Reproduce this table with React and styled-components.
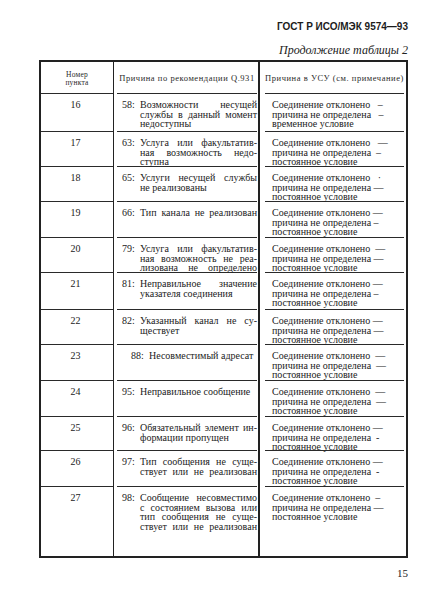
import React from 'react';
import styled, { createGlobalStyle } from 'styled-components';

const Global = createGlobalStyle`
  html, body { margin: 0; padding: 0; background: #fff; }
  #root { width: 422px; height: 603px; }
`;

const Page = styled.div`
  width: 422px;
  height: 603px;
  box-sizing: border-box;
  padding: 21px 14px 0 39px;
  font-family: "Liberation Serif", "Times New Roman", serif;
  color: #222;
  background: #fff;
  display: flex;
  flex-direction: column;
`;

const Heading = styled.div`
  display: flex;
  flex-direction: column;
  align-items: flex-end;
`;

const Title = styled.div`
  font-family: "Liberation Sans", Arial, sans-serif;
  font-weight: 700;
  font-size: 10px;
  line-height: 12px;
  color: #1c1c1c;
`;

const Subtitle = styled.div`
  margin-top: 10px;
  font-style: italic;
  font-size: 12px;
  line-height: 14px;
  color: #222;
`;

const Table = styled.div`
  margin-top: 3px;
  display: flex;
  width: 369px;
  box-sizing: border-box;
  border: 2px solid #222;
`;

const Column = styled.div`
  display: flex;
  flex-direction: column;
  flex: none;
  width: ${p => p.$w}px;
  box-sizing: border-box;
  border-right: ${p => (p.$rule ? `${p.$rule}px solid #222` : 'none')};
`;

const Cell = styled.div`
  box-sizing: border-box;
  height: ${p => p.$h}px;
  margin: 0 ${p => p.$mr || 0}px 0 ${p => p.$ml || 0}px;
  border-bottom: ${p => (p.$last ? 'none' : '1px solid #2a2a2a')};
  font-size: 10px;
  line-height: 9.5px;
`;

const HeadCell = styled(Cell)`
  display: flex;
  flex-direction: column;
  align-items: center;
  justify-content: center;
  padding-top: 2px;
  font-size: 8.5px;
  line-height: 8.5px;
  letter-spacing: 0.55px;
  color: #2a2a2a;
  text-align: center;
`;

const SmallHead = styled.div`
  font-size: 7.5px;
  line-height: 8px;
  letter-spacing: 0.2px;
`;

const NumCell = styled(Cell)`
  padding-top: 6px;
  text-align: center;
  padding-right: 3px;
`;

const ReasonCell = styled(Cell)`
  display: flex;
  padding: 6px 0 0 ${p => p.$pad}px;
`;

const Code = styled.div`
  flex: none;
  width: 18px;
`;

const Lines = styled.div`
  flex: ${p => (p.$auto ? 'none' : '1')};
  min-width: 0;
`;

const Line = styled.div`
  white-space: nowrap;
  ${p => p.$j && `
    white-space: normal;
    text-align: justify;
    text-align-last: justify;
  `}
`;

const ResultCell = styled(Cell)`
  padding: 6px 0 0 7px;
`;

const ResultLine = styled.div`
  white-space: pre;
`;

const PageNum = styled.div`
  align-self: flex-end;
  margin-top: 9px;
  font-size: 11px;
  line-height: 12px;
  color: #222;
`;

const std = ['Соединение отклонено  —', 'причина не определена  —', 'постоянное условие'];

const rows = [
  { n: '16', h: 38, code: '58:', lines: [['Возможности несущей', 1], ['службы в данный момент', 1], ['недоступны', 0]],
    res: ['Соединение отклонено   –', 'причина не определена   –', 'временное условие'] },
  { n: '17', h: 35, code: '63:', lines: [['Услуга или факультатив-', 1], ['ная возможность недо-', 1], ['ступна', 0]],
    res: ['Соединение отклонено   —', 'причина не определена  –', 'постоянное условие'] },
  { n: '18', h: 35, code: '65:', lines: [['Услуги несущей службы', 1], ['не реализованы', 0]],
    res: ['Соединение отклонено   ·', 'причина не определена —', 'постоянное условие'] },
  { n: '19', h: 36, code: '66:', lines: [['Тип канала не реализован', 1]], res: ['Соединение отклонено —', 'причина не определена –', 'постоянное условие'] },
  { n: '20', h: 35, code: '79:', lines: [['Услуга или факультатив-', 1], ['ная возможность не реа-', 1], ['лизована не определено', 1]],
    res: ['Соединение отклонено  —', 'причина не определена —', 'постоянное условие'] },
  { n: '21', h: 37, code: '81:', lines: [['Неправильное значение', 1], ['указателя соединения', 0]],
    res: ['Соединение отклонено —', 'причина не определена –', 'постоянное условие'] },
  { n: '22', h: 35, code: '82:', lines: [['Указанный канал не су-', 1], ['ществует', 0]],
    res: ['Соединение отклонено —', 'причина не определена —', 'постоянное условие'] },
  { n: '23', h: 36, code: '88:', indent: 14, lines: [['Несовместимый адресат', 0]], res: std },
  { n: '24', h: 36, code: '95:', lines: [['Неправильное сообщение', 0]], res: std },
  { n: '25', h: 34, code: '96:', lines: [['Обязательный элемент ин-', 1], ['формации пропущен', 0]],
    res: ['Соединение отклонено —', 'причина не определена  -', 'постоянное условие'] },
  { n: '26', h: 36, code: '97:', lines: [['Тип сообщения не суще-', 1], ['ствует или не реализован', 1]],
    res: ['Соединение отклонено —', 'причина не определена  -', 'постоянное условие'] },
  { n: '27', h: 69, code: '98:', lines: [['Сообщение несовместимо', 1], ['с состоянием вызова или', 1], ['тип сообщения не суще-', 1], ['ствует или не реализован', 1]],
    res: ['Соединение отклонено  –', 'причина не определена —', 'постоянное условие'] },
];

export default function App() {
  const last = rows.length - 1;
  return (
    <Page>
      <Global />
      <Heading>
        <Title>ГОСТ Р ИСО/МЭК 9574—93</Title>
        <Subtitle>Продолжение таблицы 2</Subtitle>
      </Heading>
      <Table>
        <Column $w={73} $rule={1}>
          <HeadCell $h={32}>
            <SmallHead>Номер</SmallHead>
            <SmallHead>пункта</SmallHead>
          </HeadCell>
          {rows.map((r, i) => (
            <NumCell key={r.n} $h={r.h} $last={i === last}>{r.n}</NumCell>
          ))}
        </Column>
        <Column $w={146} $rule={2}>
          <HeadCell $h={32} $ml={3} $mr={1}>Причина по рекомендации Q.931</HeadCell>
          {rows.map((r, i) => (
            <ReasonCell key={r.n} $h={r.h} $ml={3} $mr={1} $pad={r.indent || 5} $last={i === last}>
              <Code>{r.code}</Code>
              <Lines $auto={!!r.indent}>
                {r.lines.map(([t, j], k) => (
                  <Line key={k} $j={!!j}>{t}</Line>
                ))}
              </Lines>
            </ReasonCell>
          ))}
        </Column>
        <Column $w={146}>
          <HeadCell $h={32} $ml={5} $mr={2}>Причина в УСУ (см. примечание)</HeadCell>
          {rows.map((r, i) => (
            <ResultCell key={r.n} $h={r.h} $ml={5} $mr={2} $last={i === last}>
              {r.res.map((t, k) => (
                <ResultLine key={k}>{t}</ResultLine>
              ))}
            </ResultCell>
          ))}
        </Column>
      </Table>
      <PageNum>15</PageNum>
    </Page>
  );
}
